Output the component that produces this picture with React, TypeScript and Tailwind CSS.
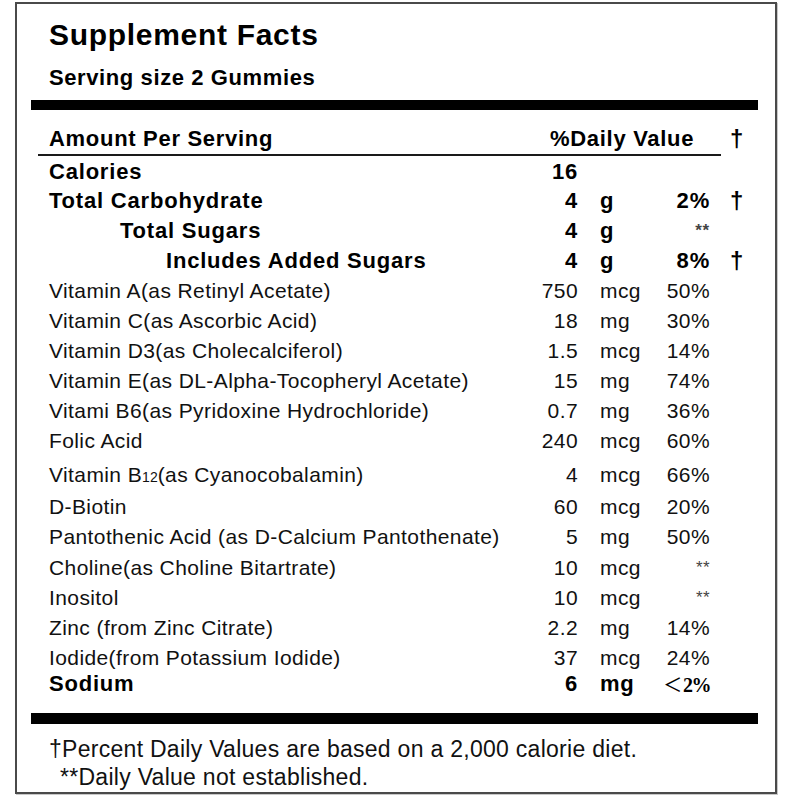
import React from 'react'

type Item = {
  name: React.ReactNode
  amt: string
  unit?: string
  dv?: React.ReactNode
  dagger?: boolean
  bold?: boolean
  indent?: string
  h: string
}

const notSet = <span className="align-[2px] text-[17px] text-[#444]">**</span>

const lessThan = (
  <span className="font-normal">
    <span className="font-['Noto_Sans_CJK_JP',sans-serif] text-[19px]">＜</span>
    <span className="font-['Liberation_Serif',serif] text-[20px] font-bold tracking-[-1.5px]">2%</span>
  </span>
)

const rows: Item[] = [
  { name: 'Calories', amt: '16', bold: true, h: 'h-[29px]' },
  { name: 'Total Carbohydrate', amt: '4', unit: 'g', dv: '2%', dagger: true, bold: true, h: 'h-[30px]' },
  { name: 'Total Sugars', amt: '4', unit: 'g', dv: notSet, bold: true, indent: 'pl-[89px]', h: 'h-[30px]' },
  { name: 'Includes Added Sugars', amt: '4', unit: 'g', dv: '8%', dagger: true, bold: true, indent: 'pl-[135px]', h: 'h-[30px]' },
  { name: 'Vitamin A(as Retinyl Acetate)', amt: '750', unit: 'mcg', dv: '50%', h: 'h-[30px]' },
  { name: 'Vitamin C(as Ascorbic Acid)', amt: '18', unit: 'mg', dv: '30%', h: 'h-[30px]' },
  { name: 'Vitamin D3(as Cholecalciferol)', amt: '1.5', unit: 'mcg', dv: '14%', h: 'h-[30px]' },
  { name: 'Vitamin E(as DL-Alpha-Tocopheryl Acetate)', amt: '15', unit: 'mg', dv: '74%', h: 'h-[30px]' },
  { name: 'Vitami B6(as Pyridoxine Hydrochloride)', amt: '0.7', unit: 'mg', dv: '36%', h: 'h-[30px]' },
  { name: 'Folic Acid', amt: '240', unit: 'mcg', dv: '60%', h: 'h-[34px]' },
  {
    name: (
      <>
        Vitamin B<span className="text-[14px] tracking-normal">12</span>(as Cyanocobalamin)
      </>
    ),
    amt: '4',
    unit: 'mcg',
    dv: '66%',
    h: 'h-[32px]',
  },
  { name: 'D-Biotin', amt: '60', unit: 'mcg', dv: '20%', h: 'h-[30px]' },
  { name: 'Pantothenic Acid (as D-Calcium Pantothenate)', amt: '5', unit: 'mg', dv: '50%', h: 'h-[31px]' },
  { name: 'Choline(as Choline Bitartrate)', amt: '10', unit: 'mcg', dv: notSet, h: 'h-[30px]' },
  { name: 'Inositol', amt: '10', unit: 'mcg', dv: notSet, h: 'h-[30px]' },
  { name: 'Zinc (from Zinc Citrate)', amt: '2.2', unit: 'mg', dv: '14%', h: 'h-[30px]' },
  { name: 'Iodide(from Potassium Iodide)', amt: '37', unit: 'mcg', dv: '24%', h: 'h-[26px]' },
  { name: 'Sodium', amt: '6', unit: 'mg', dv: lessThan, bold: true, h: 'h-[30px]' },
]

function Row({ r }: { r: Item }) {
  const type = r.bold
    ? 'text-[22px] font-bold tracking-[0.8px]'
    : 'text-[21px] tracking-[0.4px] text-[#111]'
  return (
    <div className={`flex items-start whitespace-nowrap leading-[30px] ${r.h} ${type}`}>
      <div className={`min-w-0 flex-1 ${r.indent ?? 'pl-[18px]'}`}>{r.name}</div>
      <div className="w-[80px] text-right">{r.amt}</div>
      <div className="w-[82px] pl-[22px]">{r.unit}</div>
      <div className="w-[50px] text-right">{r.dv}</div>
      <div className="w-[48px] pl-[20px] text-[24px] font-bold">{r.dagger ? '†' : ''}</div>
    </div>
  )
}

export default function App() {
  return (
    <div className="min-h-screen bg-white pl-[15px] pt-[2px] font-['Liberation_Sans',Arial,sans-serif] text-black">
      <div className="h-[792px] w-[762px] border-2 border-[#4a4a4a] pl-[14px] pr-[17px] pt-[11px] shadow-[1px_1px_0_#c8c8c8]">
        <h1 className="h-[40px] pl-[18px] text-[30px] font-bold leading-[40px] tracking-[0.7px]">
          Supplement Facts
        </h1>
        <div className="mt-[8px] h-[30px] pl-[18px] text-[22px] font-bold leading-[30px] tracking-[0.6px]">
          Serving size 2 Gummies
        </div>
        <div className="mt-[7px] h-[10px] bg-black" />

        <div className="mt-[14px] flex h-[30px] whitespace-nowrap text-[22px] font-bold leading-[30px] tracking-[0.7px]">
          <div className="flex-1 pl-[18px]">Amount Per Serving</div>
          <div className="w-[160px]">%Daily Value</div>
          <div className="w-[48px] pl-[20px] text-[24px]">†</div>
        </div>
        <div className="ml-[7px] h-[2px] w-[683px] bg-[#1a1a1a]" />

        <div className="mt-[1px]">
          {rows.map((r, i) => (
            <Row key={i} r={r} />
          ))}
        </div>

        <div className="mt-[14px] h-[11px] bg-black" />

        <div className="mt-[11px] pl-[18px] text-[23px] leading-[28px] tracking-[0.28px] text-[#111]">
          <p>†Percent Daily Values are based on a 2,000 calorie diet.</p>
          <p className="pl-[11px]">**Daily Value not established.</p>
        </div>
      </div>
    </div>
  )
}
